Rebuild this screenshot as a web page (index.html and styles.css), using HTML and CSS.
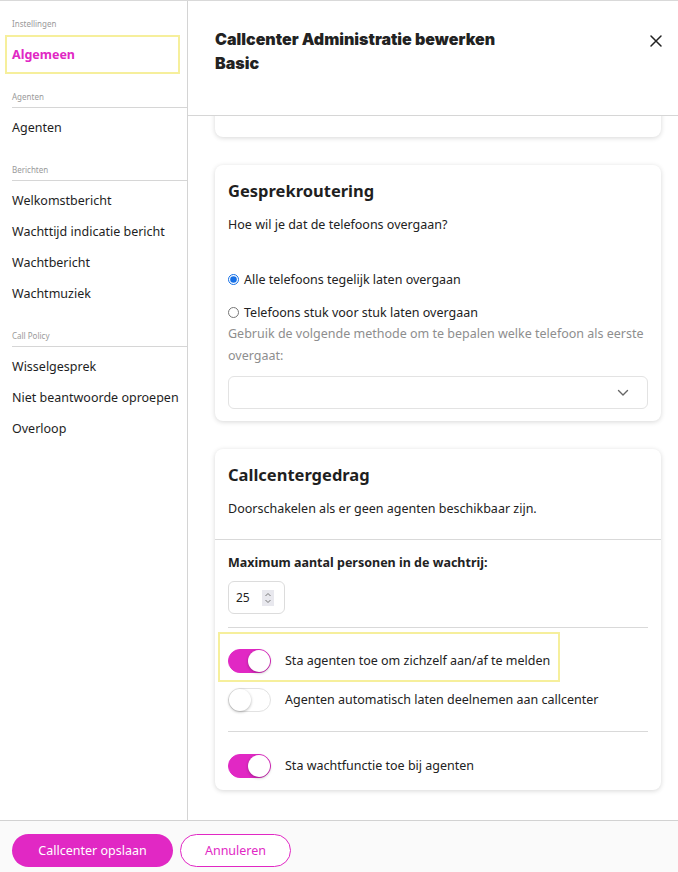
FILE: index.html
```html
<!DOCTYPE html>
<html lang="nl">
<head>
<meta charset="utf-8">
<title>Callcenter Administratie bewerken</title>
<link rel="stylesheet" href="styles.css">
</head>
<body>
<div class="app">
  <div class="body">
    <nav class="sidebar">
      <div class="group first">
        <div class="group-label">Instellingen</div>
        <ul class="items highlight">
          <li class="item active">Algemeen</li>
        </ul>
      </div>
      <div class="group">
        <div class="group-label">Agenten</div>
        <ul class="items">
          <li class="item">Agenten</li>
        </ul>
      </div>
      <div class="group">
        <div class="group-label">Berichten</div>
        <ul class="items">
          <li class="item">Welkomstbericht</li>
          <li class="item">Wachttijd indicatie bericht</li>
          <li class="item">Wachtbericht</li>
          <li class="item">Wachtmuziek</li>
        </ul>
      </div>
      <div class="group">
        <div class="group-label">Call Policy</div>
        <ul class="items">
          <li class="item">Wisselgesprek</li>
          <li class="item">Niet beantwoorde oproepen</li>
          <li class="item">Overloop</li>
        </ul>
      </div>
    </nav>
    <main class="main">
      <header class="header">
        <h1 class="title">Callcenter Administratie bewerken<br>Basic</h1>
        <button class="close" aria-label="Sluiten">
          <svg width="14" height="14" viewBox="0 0 14 14"><path d="M2 2L12 12M12 2L2 12" stroke="#222" stroke-width="1.5" stroke-linecap="round"/></svg>
        </button>
      </header>
      <div class="content">
        <section class="card stub"></section>
        <section class="card">
          <h2 class="card-title">Gesprekroutering</h2>
          <p class="text">Hoe wil je dat de telefoons overgaan?</p>
          <label class="radio first-radio"><input type="radio" name="r" checked> Alle telefoons tegelijk laten overgaan</label>
          <label class="radio"><input type="radio" name="r"> Telefoons stuk voor stuk laten overgaan</label>
          <p class="helper">Gebruik de volgende methode om te bepalen welke telefoon als eerste overgaat:</p>
          <div class="select">
            <svg width="12" height="8" viewBox="0 0 12 8"><path d="M1.5 1.5L6 6L10.5 1.5" fill="none" stroke="#666" stroke-width="1.4" stroke-linecap="round" stroke-linejoin="round"/></svg>
          </div>
        </section>
        <section class="card card-b">
          <div class="card-top">
            <h2 class="card-title">Callcentergedrag</h2>
            <p class="text">Doorschakelen als er geen agenten beschikbaar zijn.</p>
          </div>
          <div class="card-inner">
            <div class="field-label">Maximum aantal personen in de wachtrij:</div>
            <div class="number">
              <span class="num-val">25</span>
              <span class="spin">
                <svg width="8" height="14" viewBox="0 0 8 14"><path d="M1.5 5L4 2.5L6.5 5M1.5 9L4 11.5L6.5 9" fill="none" stroke="#777" stroke-width="1"/></svg>
              </span>
            </div>
            <hr class="divider">
            <div class="toggle-row highlight-row">
              <span class="toggle on"><span class="knob"></span></span>
              <span class="toggle-text">Sta agenten toe om zichzelf aan/af te melden</span>
            </div>
            <div class="toggle-row">
              <span class="toggle"><span class="knob"></span></span>
              <span class="toggle-text">Agenten automatisch laten deelnemen aan callcenter</span>
            </div>
            <hr class="divider divider-2">
            <div class="toggle-row last-row">
              <span class="toggle on"><span class="knob"></span></span>
              <span class="toggle-text">Sta wachtfunctie toe bij agenten</span>
            </div>
          </div>
        </section>
      </div>
    </main>
  </div>
  <footer class="footer">
    <button class="btn primary">Callcenter opslaan</button>
    <button class="btn outline">Annuleren</button>
  </footer>
</div>
</body>
</html>
```
FILE: styles.css
```css
* { box-sizing: border-box; }
html, body { margin: 0; padding: 0; }
body {
  font-family: "Noto Sans", "Open Sans", sans-serif;
  color: #222;
  background: #fff;
}
.app {
  width: 678px;
  height: 872px;
  border-top: 1px solid #d9d9d9;
  display: flex;
  flex-direction: column;
  overflow: hidden;
}
.body {
  display: flex;
  height: 819px;
}
.sidebar {
  width: 188px;
  flex: none;
  border-right: 1px solid #d4d4d4;
  padding-top: 17px;
}
.group { margin-top: 17px; }
.group.first { margin-top: 0; }
.group-label {
  font-size: 8px;
  line-height: 12px;
  color: #9a9a9a;
  padding: 0 0 4px 0;
  margin-left: 12px;
  border-bottom: 1px solid #d6d6d6;
}
.group.first .group-label { border-bottom-color: transparent; }
.items {
  list-style: none;
  margin: 0;
  padding: 4px 0;
  position: relative;
}
.items.highlight::before {
  content: "";
  position: absolute;
  left: 5px;
  right: 7px;
  top: 0;
  bottom: 0;
  border: 2px solid #f6ef9c;
}
.item {
  height: 31px;
  line-height: 31px;
  padding-left: 12px;
  font-size: 12.5px;
  color: #1e1e1e;
}
.item.active {
  color: #e128c4;
  font-weight: 700;
}
.main {
  flex: 1;
  display: flex;
  flex-direction: column;
  min-width: 0;
}
.header {
  height: 115px;
  flex: none;
  border-bottom: 1px solid #d6d6d6;
  padding: 26px 0 0 27px;
  display: flex;
  justify-content: space-between;
  align-items: flex-start;
  position: relative;
  z-index: 1;
  background: #fff;
}
.title {
  margin: 0;
  font-family: "Inter", "Lato", sans-serif;
  font-weight: 900;
  font-size: 16px;
  line-height: 24px;
  color: #222;
}
.close {
  border: 0;
  background: none;
  padding: 0;
  margin: 7px 15px 0 0;
  width: 14px;
  height: 14px;
  display: flex;
}
.content {
  flex: 1;
  overflow: hidden;
  padding: 0 17px 0 27px;
}
.card {
  background: #fff;
  border-radius: 8px;
  box-shadow: 0 1px 5px rgba(0, 0, 0, 0.16);
  padding: 14px 13px 12px;
  margin-top: 28px;
}
.card.stub {
  height: 40px;
  margin-top: -19px;
  padding: 0;
}
.card-title {
  margin: 0;
  font-size: 16.5px;
  line-height: 24px;
  font-weight: 700;
  color: #1f1f1f;
}
.text {
  margin: 11px 0 0;
  font-size: 12.5px;
  line-height: 22px;
}
.radio {
  display: flex;
  align-items: center;
  gap: 5px;
  height: 22px;
  font-size: 12.5px;
  margin-top: 11px;
}
.radio.first-radio { margin-top: 32px; }
.radio input {
  margin: 0;
  width: 11px;
  height: 11px;
  accent-color: #1670e6;
}
.helper {
  margin: 0;
  font-size: 12.5px;
  line-height: 22px;
  color: #8e8e8e;
}
.select {
  margin-top: 9px;
  height: 33px;
  border: 1px solid #e3e3e3;
  border-radius: 6px;
  display: flex;
  align-items: center;
  justify-content: flex-end;
  padding-right: 18px;
}
.card-b { padding: 0; }
.card-top {
  padding: 14px 13px 19px;
  border-bottom: 1px solid #d9d9d9;
}
.card-inner { padding: 13px 13px 5px; }
.field-label {
  font-size: 12.5px;
  font-weight: 700;
  line-height: 20px;
}
.number {
  margin-top: 8px;
  width: 57px;
  height: 33px;
  border: 1px solid #dcdcdc;
  border-radius: 6px;
  display: flex;
  align-items: center;
  padding-left: 7px;
  gap: 12px;
  font-size: 12px;
}
.spin {
  width: 12px;
  height: 16px;
  background: #e8e8ee;
  display: flex;
  align-items: center;
  justify-content: center;
}
.divider {
  border: 0;
  border-top: 1px solid #d9d9d9;
  margin: 13px 0 0;
}
.divider-2 { margin-top: 12px; }
.toggle-row {
  height: 39px;
  display: flex;
  align-items: center;
  gap: 14px;
  font-size: 12.5px;
  position: relative;
}
.highlight-row { margin-top: 13px; }
.last-row { margin-top: 14px; }
.highlight-row::before {
  content: "";
  position: absolute;
  left: -10px;
  width: 338px;
  top: -9px;
  bottom: -2px;
  border: 2px solid #f6ef9c;
}
.toggle {
  width: 43px;
  height: 24px;
  border-radius: 12px;
  background: #fff;
  border: 1px solid #e2e2e2;
  position: relative;
  flex: none;
}
.toggle.on {
  background: #e128c4;
  border-color: #e128c4;
}
.knob {
  position: absolute;
  top: 0;
  left: 0;
  width: 22px;
  height: 22px;
  border-radius: 50%;
  background: #fff;
  box-shadow: 0 1px 3px rgba(0, 0, 0, 0.3);
}
.toggle.on .knob { left: 19px; }
.footer {
  height: 52px;
  border-top: 1px solid #d2d2d2;
  background: #fafafa;
  display: flex;
  align-items: flex-start;
  gap: 7px;
  padding: 13px 0 0 12px;
}
.btn {
  height: 33px;
  border-radius: 17px;
  font-family: "Noto Sans", sans-serif;
  font-size: 12.5px;
  cursor: pointer;
}
.primary {
  width: 161px;
  background: #e128c4;
  color: #fff;
  border: 0;
}
.outline {
  width: 111px;
  background: #fff;
  color: #e128c4;
  border: 1px solid #e128c4;
}
```
